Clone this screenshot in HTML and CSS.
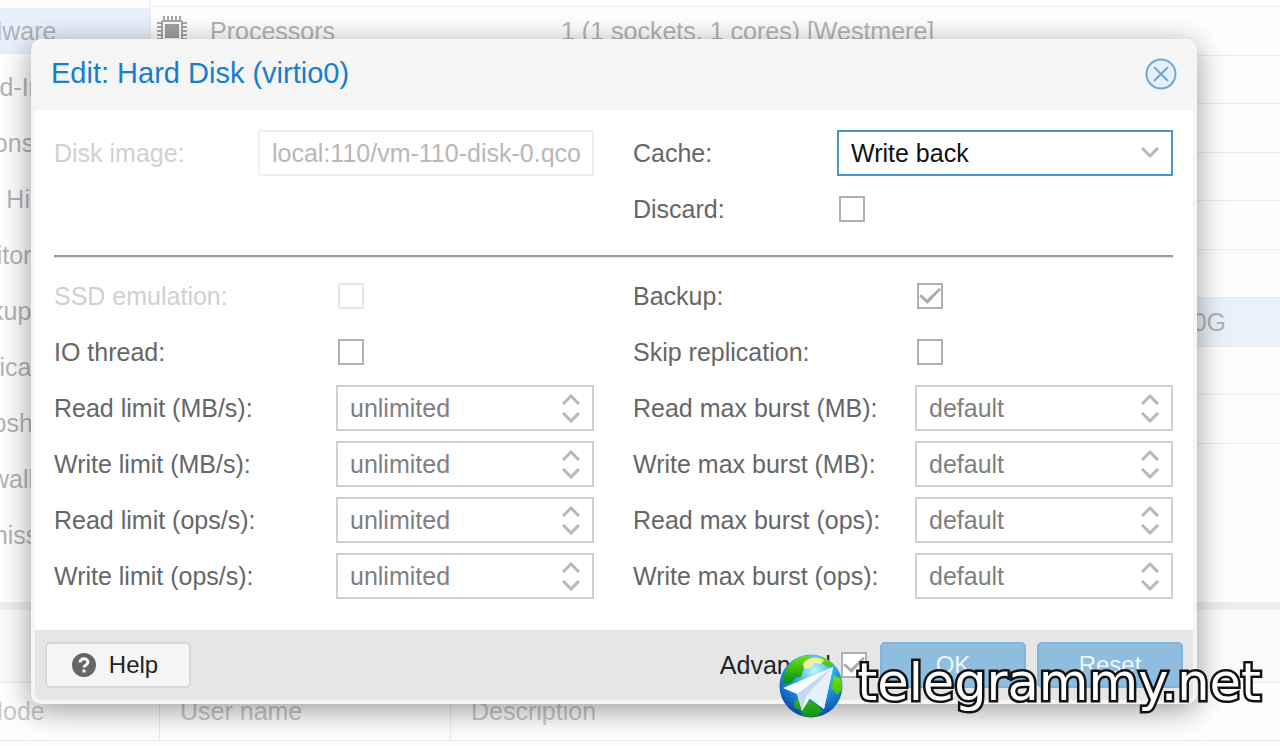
FILE: index.html
```
<!DOCTYPE html>
<html lang="en">
<head>
  <meta charset="UTF-8" />
  <meta name="viewport" content="width=device-width, initial-scale=1" />
  <title>Edit: Hard Disk (virtio0)</title>
  <link rel="stylesheet" href="styles.css">
</head>
<body>

  <!-- Shared icon shapes -->
  <svg class="sprite" aria-hidden="true">
    <symbol id="up" viewBox="0 0 18 11"><path d="M1 10 9 2l8 8" /></symbol>
    <symbol id="down" viewBox="0 0 18 11"><path d="M1 1l8 8 8-8" /></symbol>
  </svg>

  <!-- Page behind the dialog -->
  <div class="page">
    <div class="main">
      <nav class="sidebar">
        <a href="#" class="active">Hardware</a>
        <a href="#">Cloud-Init</a>
        <a href="#">Options</a>
        <a href="#">Task History</a>
        <a href="#">Monitor</a>
        <a href="#">Backup</a>
        <a href="#">Replication</a>
        <a href="#">Snapshots</a>
        <a href="#">Firewall</a>
        <a href="#">Permissions</a>
      </nav>
      <div class="hardware">
        <table class="hardware-table">
          <tr>
            <td class="icon-cell">
              <svg class="chip" viewBox="0 0 30 30" aria-hidden="true">
                <path d="M7 0v30M11 0v30M15 0v30M19 0v30M23 0v30M0 7h30M0 11h30M0 15h30M0 19h30M0 23h30" stroke="#a6a6a6" stroke-width="2" />
                <rect x="4" y="4" width="22" height="22" rx="2" fill="#a6a6a6" />
                <rect x="6" y="6" width="18" height="18" fill="#fafafa" />
                <rect x="8" y="8" width="14" height="14" fill="#a0a0a0" />
              </svg>
            </td>
            <td class="name-cell">Processors</td>
            <td>1 (1 sockets, 1 cores) [Westmere]</td>
          </tr>
          <tr><td></td><td></td><td></td></tr>
          <tr><td></td><td></td><td></td></tr>
          <tr><td></td><td></td><td></td></tr>
          <tr><td></td><td></td><td></td></tr>
          <tr><td></td><td></td><td></td></tr>
          <tr class="selected"><td></td><td></td><td class="size-cell">size=50G</td></tr>
          <tr><td></td><td></td><td></td></tr>
          <tr><td></td><td></td><td></td></tr>
        </table>
      </div>
    </div>

    <div class="log">
      <div class="log-tabs"></div>
      <table class="log-table">
        <tr>
          <th class="node-col">Node</th>
          <th class="user-col">User name</th>
          <th>Description</th>
        </tr>
      </table>
    </div>
  </div>

  <!-- Edit dialog -->
  <div class="overlay">
    <form class="dialog">
      <div class="dialog-header">
        <h1>Edit: Hard Disk (virtio0)</h1>
        <button type="button" class="close" aria-label="Close">
          <svg viewBox="0 0 32 32" aria-hidden="true">
            <circle cx="16" cy="16" r="14.5" />
            <path d="M9 9l14 14M23 9 9 23" />
          </svg>
        </button>
      </div>

      <div class="dialog-body">
        <div class="columns">
          <div class="column">
            <div class="row disabled">
              <label for="image">Disk image:</label>
              <div class="field"><input type="text" id="image" value="local:110/vm-110-disk-0.qcow2" disabled></div>
            </div>
          </div>
          <div class="column">
            <div class="row">
              <label for="cache">Cache:</label>
              <div class="field focused">
                <select id="cache"><option>Write back</option></select>
                <svg class="arrow caret" aria-hidden="true"><use href="#down" /></svg>
              </div>
            </div>
            <div class="row">
              <label for="discard">Discard:</label>
              <input type="checkbox" id="discard">
            </div>
          </div>
        </div>

        <hr>

        <div class="columns advanced">
          <div class="column">
            <div class="row disabled">
              <label for="ssd">SSD emulation:</label>
              <input type="checkbox" id="ssd" disabled>
            </div>
            <div class="row">
              <label for="iothread">IO thread:</label>
              <input type="checkbox" id="iothread">
            </div>
            <div class="row">
              <label for="rmb">Read limit (MB/s):</label>
              <div class="field">
                <input type="text" id="rmb" placeholder="unlimited">
                <div class="spinner">
                  <button type="button" aria-label="Increase"><svg class="arrow"><use href="#up" /></svg></button>
                  <button type="button" aria-label="Decrease"><svg class="arrow"><use href="#down" /></svg></button>
                </div>
              </div>
            </div>
            <div class="row">
              <label for="wmb">Write limit (MB/s):</label>
              <div class="field">
                <input type="text" id="wmb" placeholder="unlimited">
                <div class="spinner">
                  <button type="button" aria-label="Increase"><svg class="arrow"><use href="#up" /></svg></button>
                  <button type="button" aria-label="Decrease"><svg class="arrow"><use href="#down" /></svg></button>
                </div>
              </div>
            </div>
            <div class="row">
              <label for="rops">Read limit (ops/s):</label>
              <div class="field">
                <input type="text" id="rops" placeholder="unlimited">
                <div class="spinner">
                  <button type="button" aria-label="Increase"><svg class="arrow"><use href="#up" /></svg></button>
                  <button type="button" aria-label="Decrease"><svg class="arrow"><use href="#down" /></svg></button>
                </div>
              </div>
            </div>
            <div class="row">
              <label for="wops">Write limit (ops/s):</label>
              <div class="field">
                <input type="text" id="wops" placeholder="unlimited">
                <div class="spinner">
                  <button type="button" aria-label="Increase"><svg class="arrow"><use href="#up" /></svg></button>
                  <button type="button" aria-label="Decrease"><svg class="arrow"><use href="#down" /></svg></button>
                </div>
              </div>
            </div>
          </div>

          <div class="column">
            <div class="row">
              <label for="backup">Backup:</label>
              <input type="checkbox" id="backup" checked>
            </div>
            <div class="row">
              <label for="replication">Skip replication:</label>
              <input type="checkbox" id="replication">
            </div>
            <div class="row">
              <label for="rmbmax">Read max burst (MB):</label>
              <div class="field">
                <input type="text" id="rmbmax" placeholder="default">
                <div class="spinner">
                  <button type="button" aria-label="Increase"><svg class="arrow"><use href="#up" /></svg></button>
                  <button type="button" aria-label="Decrease"><svg class="arrow"><use href="#down" /></svg></button>
                </div>
              </div>
            </div>
            <div class="row">
              <label for="wmbmax">Write max burst (MB):</label>
              <div class="field">
                <input type="text" id="wmbmax" placeholder="default">
                <div class="spinner">
                  <button type="button" aria-label="Increase"><svg class="arrow"><use href="#up" /></svg></button>
                  <button type="button" aria-label="Decrease"><svg class="arrow"><use href="#down" /></svg></button>
                </div>
              </div>
            </div>
            <div class="row">
              <label for="ropsmax">Read max burst (ops):</label>
              <div class="field">
                <input type="text" id="ropsmax" placeholder="default">
                <div class="spinner">
                  <button type="button" aria-label="Increase"><svg class="arrow"><use href="#up" /></svg></button>
                  <button type="button" aria-label="Decrease"><svg class="arrow"><use href="#down" /></svg></button>
                </div>
              </div>
            </div>
            <div class="row">
              <label for="wopsmax">Write max burst (ops):</label>
              <div class="field">
                <input type="text" id="wopsmax" placeholder="default">
                <div class="spinner">
                  <button type="button" aria-label="Increase"><svg class="arrow"><use href="#up" /></svg></button>
                  <button type="button" aria-label="Decrease"><svg class="arrow"><use href="#down" /></svg></button>
                </div>
              </div>
            </div>
          </div>
        </div>
      </div>

      <div class="dialog-footer">
        <button type="button" class="btn help">
          <svg viewBox="0 0 24 24" aria-hidden="true">
            <circle cx="12" cy="12" r="12" fill="#666" />
            <path d="M8 9.5C8 4.5 16 4.8 16 9.3c0 2.7-4 2.7-4 5.2" fill="none" stroke="#f5f5f5" stroke-width="3" />
            <rect x="10.5" y="16.5" width="3" height="3" fill="#f5f5f5" />
          </svg>
          Help
        </button>
        <label for="advanced" class="advanced-label">Advanced</label>
        <input type="checkbox" id="advanced" checked>
        <button type="submit" class="btn primary">OK</button>
        <button type="reset" class="btn primary">Reset</button>
      </div>
    </form>
  </div>

  <!-- Site watermark -->
  <div class="watermark">
    <svg viewBox="0 0 64 64" aria-hidden="true">
      <defs>
        <radialGradient id="sea" cx="55%" cy="25%" r="75%">
          <stop offset="0" stop-color="#c4f8ff" />
          <stop offset="0.45" stop-color="#27a5e8" />
          <stop offset="1" stop-color="#0647a8" />
        </radialGradient>
        <linearGradient id="land" x1="0" y1="0" x2="0" y2="1">
          <stop offset="0" stop-color="#6fe00c" />
          <stop offset="1" stop-color="#079016" />
        </linearGradient>
        <clipPath id="globe"><circle cx="32" cy="32" r="31" /></clipPath>
      </defs>
      <circle cx="32" cy="32" r="31.5" fill="url(#sea)" />
      <g clip-path="url(#globe)">
        <path d="M4 29C4 15 13 5 25 2l8 1-2 8-7 5-2 7-6 1-4 5zM41 2l10 5 3 6-7-1-6-4z" fill="url(#land)" />
        <path d="M55 22l8 3v12l-5 4-6-7zM16 46l8-1 12 4 8 8-9 8H25l-3-8-7-4z" fill="url(#land)" />
        <path d="M24 10c4-7 14-8 21-4l-3 4-6-1-5 5-6 1z" fill="#eef3a4" />
      </g>
      <path d="M4 34 54 13 45 55 31 44 23 57 18 40z" fill="#f7fbff" />
      <path d="M54 13 18 40l5 17 4-14z" fill="#c5d9ea" />
      <path d="M54 13 27 42l18 13z" fill="#e6f1fa" />
    </svg>
    <span>telegrammy.net</span>
  </div>

</body>
</html>
```
FILE: styles.css
```
* {
  margin: 0;
  padding: 0;
  box-sizing: border-box;
}

body {
  font-family: "Liberation Sans", Arial, sans-serif;
  font-size: 25px;
  color: #666;
  background: #fefefe;
  height: 100vh;
  overflow: hidden;
}

input,
select,
button {
  font: inherit;
}

.sprite {
  display: none;
}

/* Page behind the dialog */
.page {
  display: flex;
  flex-direction: column;
  min-height: 100vh;
  overflow: hidden;
  color: #b4b4b4;
}
.main {
  display: flex;
  min-height: 602px;
}

/* Sidebar is scrolled off to the left */
.sidebar {
  display: flex;
  flex-direction: column;
  gap: 10px;
  width: 251px;
  flex-shrink: 0;
  margin-left: -100px;
  padding-top: 8px;
  border-right: 2px solid #eee;
}
.sidebar a {
  padding-left: 48px;
  line-height: 46px;
  color: inherit;
  text-decoration: none;
}
.sidebar .active {
  background: #e7f0fb;
}

.hardware {
  flex: 1;
  padding-top: 6px;
}
.hardware-table {
  width: 100%;
  border-collapse: collapse;
  table-layout: fixed;
}
.hardware-table td {
  height: 49px;
  border-top: 1px solid #ececec;
  border-bottom: 1px solid #ececec;
}
.hardware-table tr:nth-child(even) {
  background: #fdfdfd;
}
.hardware-table tr:nth-child(even) td {
  height: 48px;
}
.hardware-table .icon-cell {
  width: 59px;
  padding-left: 6px;
}
.hardware-table .name-cell {
  width: 351px;
}
.hardware-table .selected {
  background: #e9f1f9;
}
.hardware-table .size-cell {
  padding-right: 54px;
  text-align: right;
}
.chip {
  display: block;
  width: 30px;
  height: 30px;
}

/* Log panel */
.log {
  border-top: 8px solid #eee;
}
.log-tabs {
  height: 72px;
  background: #fbfbfb;
}
.log-table {
  width: calc(100% + 40px);
  margin-left: -40px;
  border-collapse: collapse;
  table-layout: fixed;
  color: #c8c8c8;
}
.log-table th {
  height: 58px;
  padding-left: 20px;
  border: 1px solid #e9e9e9;
  border-right: none;
  font-weight: normal;
  text-align: left;
}
.log-table .node-col {
  width: 199px;
  padding-left: 24px;
}
.log-table .user-col {
  width: 291px;
}

/* Dialog */
.overlay {
  position: absolute;
  top: 0;
  left: 0;
  width: 100%;
  padding: 39px 83px 0 31px;
}
.dialog {
  border: 4px solid #f5f5f5;
  border-top: none;
  border-radius: 10px;
  background: #fff;
  box-shadow: 0 6px 30px rgba(0, 0, 0, 0.4);
}
.dialog-header {
  display: flex;
  align-items: center;
  justify-content: space-between;
  height: 71px;
  padding: 0 16px 2px;
  border-radius: 10px 10px 0 0;
  background: #f5f5f5;
}
.dialog-header h1 {
  font-size: 29px;
  font-weight: normal;
  color: #157fcc;
}
.close {
  width: 32px;
  height: 32px;
  border: none;
  background: none;
}
.close svg {
  display: block;
  fill: #e6f0f8;
  stroke: #6fa8d4;
  stroke-width: 2;
}

.dialog-body {
  padding: 20px 20px 31px 19px;
}
.columns {
  display: grid;
  grid-template-columns: repeat(2, minmax(0, 1fr));
  gap: 39px;
}
.column {
  display: flex;
  flex-direction: column;
  gap: 10px;
}
.row {
  display: flex;
  align-items: center;
  height: 46px;
}
.row label {
  width: 204px;
  flex-shrink: 0;
}
.advanced label {
  width: 282px;
}
.disabled {
  color: #d0d0d0;
}
hr {
  margin: 23px 0 15px;
  border: none;
  border-top: 2px solid #999;
  border-bottom: 1px solid #e8e8e8;
}

.field {
  position: relative;
  display: flex;
  flex: 1;
  min-width: 0;
  height: 46px;
  border: 2px solid #cfcfcf;
}
.field input,
.field select {
  flex: 1;
  min-width: 0;
  margin: 0 12px;
  border: none;
  outline: none;
  background: none;
  color: #111;
  appearance: none;
}
.field input::placeholder {
  color: #808080;
}
.disabled .field {
  border-color: #f0f0f0;
}
.disabled .field input {
  color: #b8b8b8;
}
.focused {
  border-color: #4a96c8;
}

.arrow {
  display: block;
  width: 18px;
  height: 11px;
  fill: none;
  stroke: #b8b8b8;
  stroke-width: 3;
}
/* Sits on top of the select */
.caret {
  position: absolute;
  top: 15px;
  right: 12px;
  pointer-events: none;
}
.spinner {
  display: flex;
  flex-direction: column;
  justify-content: center;
  gap: 7px;
  padding-right: 12px;
}
.spinner button {
  border: none;
  background: none;
}

input[type="checkbox"] {
  display: grid;
  place-items: center;
  flex-shrink: 0;
  width: 26px;
  height: 26px;
  margin: 0 2px;
  border: 2px solid #b0b0b0;
  background: #fff;
  appearance: none;
}
input[type="checkbox"]:disabled {
  border-color: #e6e6e6;
}
input[type="checkbox"]:checked::before {
  content: "";
  width: 22px;
  height: 16px;
  background: #aaa;
  clip-path: polygon(0 50%, 10% 40%, 36% 72%, 92% 0, 100% 10%, 38% 100%);
}

.dialog-footer {
  display: flex;
  align-items: center;
  height: 70px;
  padding: 0 10px;
  border-radius: 0 0 6px 6px;
  background: #e6e6e6;
}
.btn {
  width: 146px;
  height: 46px;
  border: 2px solid #d8d8d8;
  border-radius: 5px;
  font-size: 24px;
}
.help {
  display: flex;
  align-items: center;
  justify-content: center;
  gap: 13px;
  margin-right: auto;
  padding-right: 6px;
  background: #f5f5f5;
  color: #222;
}
.help svg {
  width: 24px;
  height: 24px;
}
.primary {
  margin-left: 11px;
  border-color: #82b3d9;
  background: #8fbde0;
  color: #f0f6fb;
}
.advanced-label {
  margin-right: 8px;
  color: #222;
}

/* Watermark */
.watermark {
  position: absolute;
  right: 19px;
  bottom: 28px;
  display: flex;
  align-items: center;
  gap: 14px;
  pointer-events: none;
}
.watermark svg {
  width: 64px;
  height: 64px;
}
.watermark span {
  padding-bottom: 6px;
  font-family: "DejaVu Sans", sans-serif;
  font-size: 51px;
  line-height: 58px;
  color: #fff;
  -webkit-text-stroke: 5px #111;
  stroke-linejoin: round;
  paint-order: stroke fill;
}
```
